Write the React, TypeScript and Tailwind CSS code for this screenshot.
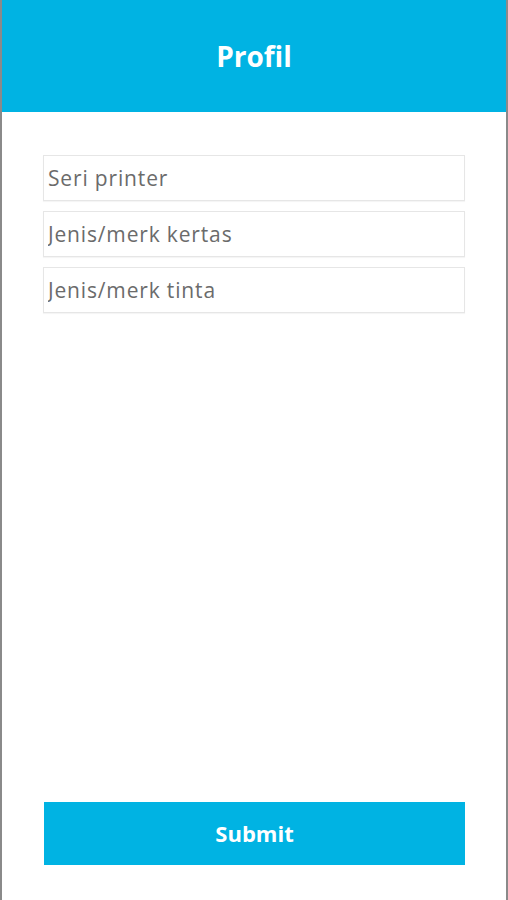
import React from 'react';

const fields = ['Seri printer', 'Jenis/merk kertas', 'Jenis/merk tinta'];

const App: React.FC = () => {
  return (
    <div
      className="w-[508px] h-[900px] bg-white border-l-2 border-r-2 border-[#8a8a8a] flex flex-col overflow-hidden"
      style={{ fontFamily: '"Open Sans", "Noto Sans", sans-serif' }}
    >
      <div className="h-[112px] bg-[#00b3e3] flex items-center justify-center">
        <h1 className="text-white text-[28px] font-bold">Profil</h1>
      </div>

      <div className="flex-1 flex flex-col px-[41px] pt-[43px] pb-[35px]">
        <div className="flex flex-col gap-[10px]">
          {fields.map((f) => (
            <input
              key={f}
              placeholder={f}
              className="h-[46px] w-full border border-[#e6e6e6] shadow-[0_1px_1px_rgba(0,0,0,0.04)] px-[4px] text-[21px] tracking-[0.04em] text-[#666] placeholder:text-[#6b6b6b] outline-none"
            />
          ))}
        </div>

        <div className="flex-1" />

        <button className="h-[63px] w-[421px] ml-[1px] bg-[#00b3e3] text-white text-[22px] font-bold">
          Submit
        </button>
      </div>
    </div>
  );
};

export default App;
